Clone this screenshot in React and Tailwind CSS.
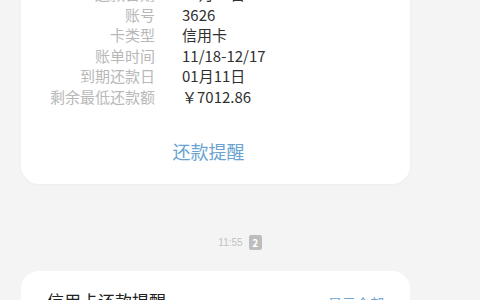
import React from 'react';

const rows = [
  { label: '还款日期', value: '01月09日' },
  { label: '账号', value: '3626' },
  { label: '卡类型', value: '信用卡' },
  { label: '账单时间', value: '11/18-12/17' },
  { label: '到期还款日', value: '01月11日' },
  { label: '剩余最低还款额', value: '￥7012.86' },
];

const App = () => {
  return (
    <div
      className="w-[480px] h-[300px] overflow-hidden bg-[#f4f4f4]"
      style={{ fontFamily: '"Noto Sans CJK SC", "Noto Sans", sans-serif' }}
    >
      {/* 账单卡片 */}
      <div className="ml-[21px] w-[389px] -mt-[16px] bg-white rounded-b-[18px] pb-[21px] shadow-[0_1px_3px_rgba(0,0,0,0.03)]">
        <div className="flex flex-col">
          {rows.map((row) => (
            <div key={row.label} className="flex items-center h-[20.5px] text-[15px] leading-[20px]">
              <span className="w-[134px] text-right text-[#b8b8b8]">{row.label}</span>
              <span className="ml-[27px] text-[#303030]">{row.value}</span>
            </div>
          ))}
        </div>
        <div className="mt-[32px] text-center text-[18px] leading-[24px] text-[#6aa3d2] pr-[14px]">
          还款提醒
        </div>
      </div>

      {/* 时间 */}
      <div className="mt-[51px] flex items-center justify-center gap-[6px] h-[14px]">
        <span className="text-[10px] text-[#c2c2c2]" style={{ fontFamily: '"Liberation Sans", sans-serif' }}>11:55</span>
        <span className="w-[13px] h-[15px] rounded-[2px] bg-[#bdbdbd] text-white text-[10px] leading-[15px] text-center font-bold">2</span>
      </div>

      {/* 第二张卡片 */}
      <div className="ml-[21px] w-[389px] mt-[22px] bg-white rounded-t-[18px] pt-[18px] px-[26px] h-[60px] flex justify-between">
        <span className="text-[17px] leading-[24px] text-[#222]">信用卡还款提醒</span>
        <span className="text-[14px] leading-[24px] text-[#6aa3d2] mt-[2px]">显示全部</span>
      </div>
    </div>
  );
};

export default App;
